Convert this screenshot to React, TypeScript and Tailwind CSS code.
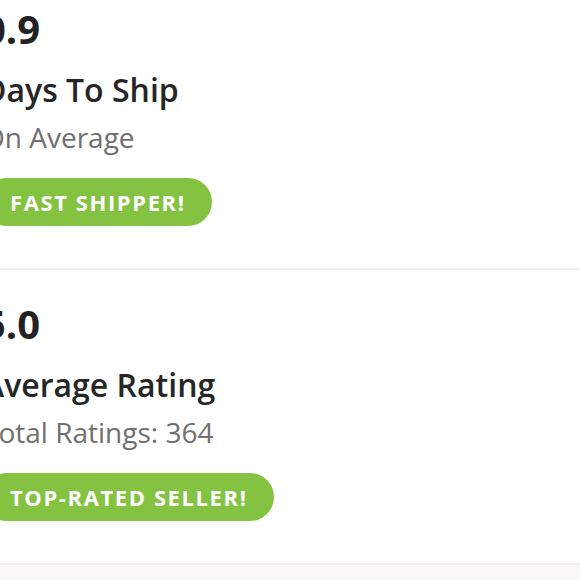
import React from "react";

interface IStat {
    value: string;
    title: string;
    subtitle: string;
    badge: string;
}

const stats: IStat[] = [
    { value: "0.9", title: "Days To Ship", subtitle: "On Average", badge: "FAST SHIPPER!" },
    { value: "5.0", title: "Average Rating", subtitle: "Total Ratings: 364", badge: "TOP-RATED SELLER!" }
];

function StatBlock({ value, title, subtitle, badge }: IStat) {
    return (
        <div className="pt-[30px] pb-[42px] border-b-2 border-[#f0efef]">
            <div className="-ml-[17px]">
                <div className="text-[40px] leading-[48px] font-bold text-[#222222]">{value}</div>
                <div className="mt-[17px] text-[32px] leading-[40px] font-semibold text-[#262626]">{title}</div>
                <div className="mt-[9px] text-[28px] leading-[36px] text-[#6f6f6f]">{subtitle}</div>
                <div className="mt-[23px] flex">
                    <div className="flex h-[48px] items-center rounded-full bg-[#84c341] pl-[27px] pr-[26px]">
                        <span className="text-[22px] font-bold tracking-[1.6px] text-white">{badge}</span>
                    </div>
                </div>
            </div>
        </div>
    );
}

export default function App() {
    return (
        <div className="w-[580px] h-[580px] overflow-hidden bg-[#faf8f9]" style={{ fontFamily: "'Open Sans', sans-serif" }}>
            <div className="bg-white -mt-[25px]">
                {stats.map(s => (
                    <StatBlock key={s.value} {...s} />
                ))}
            </div>
        </div>
    );
}
